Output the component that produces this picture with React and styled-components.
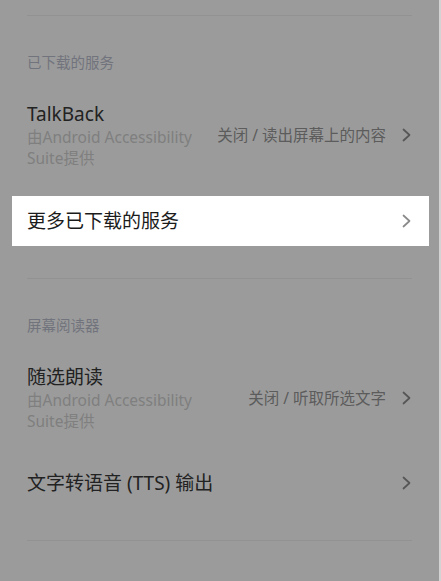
import styled, { createGlobalStyle } from 'styled-components';

const GlobalStyle = createGlobalStyle`
  html, body {
    margin: 0;
    padding: 0;
    background: #9b9b9b;
    overflow: hidden;
  }
  body {
    font-family: "Noto Sans", "Noto Sans CJK SC", sans-serif;
    -webkit-font-smoothing: antialiased;
  }
`;

const Screen = styled.div`
  display: flex;
  width: 441px;
  height: 581px;
  overflow: hidden;
  box-sizing: border-box;
  border-right: 2px solid #d3d3d3;
  background: #9b9b9b;
`;

const Page = styled.main`
  flex: 1;
  display: flex;
  flex-direction: column;
  padding-top: 15px;
`;

const Divider = styled.hr`
  height: 1px;
  margin: 0 27px 0 27px;
  border: 0;
  background: #929292;
`;

const Section = styled.section`
  display: flex;
  flex-direction: column;
  gap: 15px;
  padding-bottom: 32px;
`;

const SectionTitle = styled.h3`
  margin: 36px 27px 2.5px;
  font-size: 14.5px;
  line-height: 20px;
  font-weight: 400;
  color: #72747d;
`;

const Item = styled.div`
  display: flex;
  align-items: center;
  gap: 16px;
  margin: ${(p) => (p.$active ? '0 10px 0 12px' : '0')};
  padding: ${(p) => (p.$active ? '12px 18px 12.5px 15px' : '11.5px 28px 11.5px 27px')};
  background: ${(p) => (p.$active ? '#ffffff' : 'transparent')};
`;

const Texts = styled.div`
  flex: 1;
  min-width: 0;
`;

const Title = styled.div`
  font-size: 19px;
  line-height: 26px;
  color: ${(p) => (p.$active ? '#1b1b1b' : '#222222')};
`;

const Sub = styled.div`
  max-width: 180px;
  font-size: 15.5px;
  line-height: 21px;
  color: #7f7f7f;
`;

const Value = styled.span`
  font-size: 15.5px;
  line-height: 21px;
  color: #5c5c5c;
  white-space: nowrap;
`;

const Chevron = ({ active }) => (
  <svg width="9" height="14" viewBox="0 0 9 14" style={{ flexShrink: 0 }}>
    <polyline
      points="1.5,1.5 7.5,7 1.5,12.5"
      fill="none"
      stroke={active ? '#8a8a8a' : '#565656'}
      strokeWidth="1.7"
      strokeLinecap="round"
      strokeLinejoin="round"
    />
  </svg>
);

const Row = ({ title, sub, value, active }) => (
  <Item $active={active}>
    <Texts>
      <Title $active={active}>{title}</Title>
      {sub && <Sub>{sub}</Sub>}
    </Texts>
    {value && <Value>{value}</Value>}
    <Chevron active={active} />
  </Item>
);

const sections = [
  {
    title: '已下载的服务',
    rows: [
      {
        title: 'TalkBack',
        sub: '由Android Accessibility Suite提供',
        value: '关闭 / 读出屏幕上的内容',
      },
      { title: '更多已下载的服务', active: true },
    ],
  },
  {
    title: '屏幕阅读器',
    rows: [
      {
        title: '随选朗读',
        sub: '由Android Accessibility Suite提供',
        value: '关闭 / 听取所选文字',
      },
      { title: '文字转语音 (TTS) 输出' },
    ],
  },
  { title: '显示', rows: [] },
];

export default function App() {
  return (
    <>
      <GlobalStyle />
      <Screen>
        <Page>
          {sections.map((s) => (
            <div key={s.title}>
              <Divider />
              <Section>
                <SectionTitle>{s.title}</SectionTitle>
                {s.rows.map((r) => (
                  <Row key={r.title} {...r} />
                ))}
              </Section>
            </div>
          ))}
        </Page>
      </Screen>
    </>
  );
}
